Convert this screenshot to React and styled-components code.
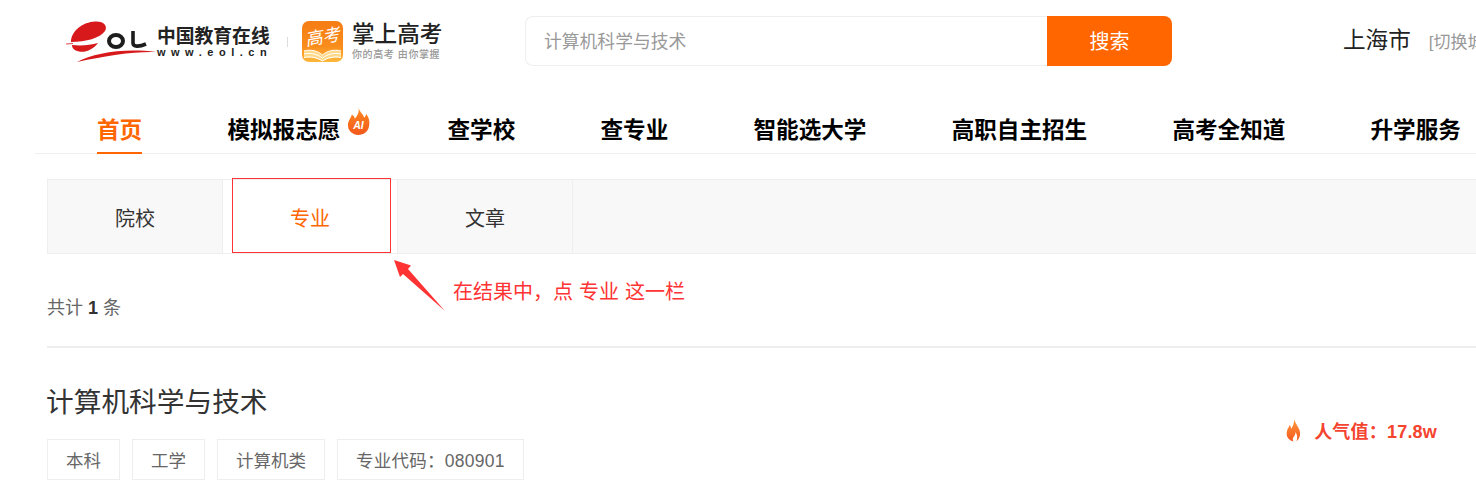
import React from 'react'
import styled, { createGlobalStyle } from 'styled-components'

const GlobalStyle = createGlobalStyle`
  html, body { margin: 0; padding: 0; background: #fff; }
  body { font-family: "Liberation Sans", "Noto Sans CJK SC", sans-serif; overflow: hidden; }
  * { box-sizing: border-box; }
`

const Page = styled.div`
  position: relative;
  width: 1476px;
  height: 497px;
  overflow: hidden;
`
const Header = styled.header`
  display: flex;
  align-items: flex-start;
  height: 97px;
  padding: 16px 0 0 70px;
  white-space: nowrap;
`
const Brand = styled.div`
  display: flex;
  flex: none;
  align-items: center;
  width: 455px;
  height: 50px;
`
const EolMark = styled.svg`
  flex: none;
  margin: 2px 0 0 -8px;
`
const EolText = styled.div`
  display: flex;
  flex: none;
  flex-direction: column;
  width: 113px;
  margin-top: 1px;
`
const EolName = styled.span`
  font-size: 18.8px;
  line-height: 21px;
  font-weight: 700;
  color: #222;
`
const EolUrl = styled.span`
  font-size: 11px;
  line-height: 11px;
  font-weight: 700;
  letter-spacing: 5.5px;
  color: #222;
`
const BrandDivider = styled.i`
  flex: none;
  width: 1px;
  height: 10px;
  margin: 2px 14px 0 17px;
  background: #ddd;
`
const AppIcon = styled.div`
  position: relative;
  flex: none;
  width: 41px;
  height: 41px;
  margin-right: 9px;
  border-radius: 7px;
  overflow: hidden;
  background: linear-gradient(180deg, #f67c14 0%, #f98d1c 62%, #fdb83c 100%);
`
const AppIconText = styled.span`
  position: absolute;
  top: 6px;
  left: 3px;
  font-family: "Liberation Serif", "Noto Sans CJK SC", serif;
  font-size: 17.5px;
  line-height: 20px;
  font-style: italic;
  color: #fff;
  transform: rotate(-10deg);
`
const AppBook = styled.svg`
  position: absolute;
  left: 0;
  bottom: 0;
`
const AppText = styled.div`
  display: flex;
  flex-direction: column;
  margin-top: 1px;
`
const AppName = styled.span`
  font-size: 22.6px;
  line-height: 26px;
  font-weight: 500;
  color: #222;
`
const AppSlogan = styled.span`
  font-size: 10px;
  line-height: 13px;
  font-weight: 500;
  letter-spacing: 0.6px;
  color: #999;
`
const Search = styled.div`
  display: flex;
  flex: none;
  width: 647px;
  height: 50px;
  border: 1px solid #eee;
  border-right: 0;
  border-radius: 8px;
`
const SearchInput = styled.div`
  flex: 1;
  padding-left: 18px;
  font-size: 17.8px;
  line-height: 50px;
  color: #999;
`
const SearchButton = styled.div`
  width: 125px;
  height: 50px;
  margin: -1px 0;
  border-radius: 0 8px 8px 0;
  background: #f60;
  color: #fff;
  font-size: 20px;
  line-height: 52px;
  text-align: center;
`
const City = styled.div`
  display: flex;
  flex: none;
  align-items: baseline;
  margin-left: 171px;
  line-height: 50px;
`
const CityName = styled.span`
  font-size: 22.6px;
  color: #222;
`
const CitySwitch = styled.span`
  margin-left: 18px;
  font-size: 17px;
  color: #999;
`
const Nav = styled.nav`
  display: flex;
  gap: 85.2px;
  height: 57px;
  margin-left: 35px;
  padding-left: 62px;
  border-bottom: 1px solid #eee;
  white-space: nowrap;
`
const NavItem = styled.a`
  position: relative;
  flex: none;
  height: 57px;
  margin-right: ${p => (p.$hot ? '22px' : '0')};
  border-bottom: ${p => (p.$active ? '2px solid #f60' : '0')};
  font-size: 22.6px;
  line-height: 68px;
  font-weight: 700;
  color: ${p => (p.$active ? '#f60' : '#000')};
`
const HotBadge = styled.svg`
  position: absolute;
  top: 10px;
  right: -30px;
`
const Main = styled.main`
  padding: 25px 0 0 47px;
`
const Tabs = styled.div`
  display: flex;
  width: 1500px;
  height: 75px;
  border: 1px solid #eee;
  border-right: 0;
  background: #f8f8f8;
`
const Tab = styled.div`
  width: 175px;
  border-right: 1px solid #eee;
  background: ${p => (p.$active ? '#fff' : 'transparent')};
  color: ${p => (p.$active ? '#f60' : '#333')};
  font-size: 20px;
  line-height: 78px;
  text-align: center;
`
const Count = styled.div`
  height: 94px;
  padding-top: 41px;
  border-bottom: 2px solid #eee;
  font-size: 18px;
  line-height: 26px;
  color: #666;
  b { color: #333; }
`
const Result = styled.div`
  display: flex;
  justify-content: space-between;
  padding: 35px 39px 0 0;
`
const Title = styled.h2`
  margin: 0 0 0 -1px;
  font-size: 27.7px;
  line-height: 40px;
  font-weight: 400;
  color: #333;
`
const TagRow = styled.div`
  display: flex;
  gap: 12px;
  margin-top: 16px;
`
const Tag = styled.span`
  height: 41px;
  padding: 0 18px;
  border: 1px solid #eee;
  font-size: 17.5px;
  line-height: 42px;
  letter-spacing: ${p => (p.$code ? '0.26px' : '0')};
  color: #666;
`
const Popularity = styled.div`
  display: flex;
  align-items: center;
  gap: 13px;
  height: 26px;
  margin-top: 34px;
  font-size: 18px;
  font-weight: 700;
  letter-spacing: 0.2px;
  color: #f4432f;
`
const HighlightBox = styled.div`
  position: absolute;
  left: 232px;
  top: 178px;
  width: 159px;
  height: 75px;
  border: 1px solid #f33;
`
const ArrowMark = styled.svg`
  position: absolute;
  left: 390px;
  top: 255px;
`
const Note = styled.div`
  position: absolute;
  left: 453px;
  top: 277px;
  font-size: 20px;
  line-height: 30px;
  word-spacing: 0.5px;
  color: #f33;
  white-space: pre;
`

const EolLogo = () => (
  <EolMark width="95" height="48" viewBox="0 0 95 48">
    <path d="M9 24 C9 13 21 4 33 3.5 C42 3 46 8 43 13 C38 20 24 24 9 24 Z" fill="#d7191c" />
    <path d="M10 27 C20 28 28 27 36 25 C32 31 23 35 17 33.5 C12 32.5 10 30 10 27 Z" fill="#d7191c" />
    <path d="M4 26 L11 25.5" stroke="#d7191c" strokeWidth="0.8" />
    <ellipse cx="54" cy="23" rx="7" ry="6" fill="none" stroke="#1d1d1d" strokeWidth="4" />
    <path d="M71 13 L71 25 C71 29 77 29 84 26" fill="none" stroke="#1d1d1d" strokeWidth="3.6" />
    <path d="M15 44 C32 35 62 30 94 34 C70 33.5 45 37.5 15 44 Z" fill="#d7191c" />
  </EolMark>
)

const AppLogo = () => (
  <AppIcon>
    <AppIconText>高考</AppIconText>
    <AppBook width="41" height="14" viewBox="0 0 41 14">
      <path d="M2 3 C9 1 16 3 20.5 7 C25 3 32 1 39 3 L39 10 C32 9 26 10 20.5 13 C15 10 9 9 2 10 Z" fill="#ffd98a" />
      <path d="M2 3 C9 1 16 3 20.5 7 M39 3 C32 1 25 3 20.5 7 M2 6 C9 4.5 15 6 20.5 10 M39 6 C32 4.5 26 6 20.5 10 M2 9.5 C9 8 15 9.5 20.5 13 M39 9.5 C32 8 26 9.5 20.5 13" stroke="#fff" strokeWidth="1" fill="none" />
    </AppBook>
  </AppIcon>
)

const navItems = ['查学校', '查专业', '智能选大学', '高职自主招生', '高考全知道', '升学服务']

const App = () => {
  return (
    <Page>
      <GlobalStyle />
      <Header>
        <Brand>
          <EolLogo />
          <EolText>
            <EolName>中国教育在线</EolName>
            <EolUrl>www.eol.cn</EolUrl>
          </EolText>
          <BrandDivider />
          <AppLogo />
          <AppText>
            <AppName>掌上高考</AppName>
            <AppSlogan>你的高考 由你掌握</AppSlogan>
          </AppText>
        </Brand>
        <Search>
          <SearchInput>计算机科学与技术</SearchInput>
          <SearchButton>搜索</SearchButton>
        </Search>
        <City>
          <CityName>上海市</CityName>
          <CitySwitch>[切换城市]</CitySwitch>
        </City>
      </Header>
      <Nav>
        <NavItem $active>首页</NavItem>
        <NavItem $hot>
          模拟报志愿
          <HotBadge width="23" height="29" viewBox="0 0 24 30">
            <defs>
              <linearGradient id="hot" x1="0" y1="0" x2="0" y2="1">
                <stop offset="0" stopColor="#ff8a1e" />
                <stop offset="1" stopColor="#f2581c" />
              </linearGradient>
            </defs>
            <path d="M12 0 C13 5 17 7 18 11 C19 10 20 9 20 7 C23 11 24 15 23 20 C22 26 17 29 12 29 C6 29 1 25 1 19 C1 14 4 12 5 8 C7 9 8 10 8 12 C11 9 13 5 12 0 Z" fill="url(#hot)" />
            <text x="12" y="23" fontSize="11" fontWeight="700" fontStyle="italic" fill="#fff" textAnchor="middle">AI</text>
          </HotBadge>
        </NavItem>
        {navItems.map(item => <NavItem key={item}>{item}</NavItem>)}
      </Nav>
      <Main>
        <Tabs>
          <Tab>院校</Tab>
          <Tab $active>专业</Tab>
          <Tab>文章</Tab>
        </Tabs>
        <Count>共计 <b>1</b> 条</Count>
        <Result>
          <div>
            <Title>计算机科学与技术</Title>
            <TagRow>
              <Tag>本科</Tag>
              <Tag>工学</Tag>
              <Tag>计算机类</Tag>
              <Tag $code>专业代码：080901</Tag>
            </TagRow>
          </div>
          <Popularity>
            <svg width="15" height="23" viewBox="0 0 15 23">
              <defs>
                <linearGradient id="fire" x1="0" y1="0" x2="0" y2="1">
                  <stop offset="0" stopColor="#ff9a3c" />
                  <stop offset="1" stopColor="#f4581f" />
                </linearGradient>
              </defs>
              <path d="M8 0 C9 4 12 7 13.5 11 C15 15 14 19 10.5 22.5 C11.5 19 11.5 16 9.5 13 C9.5 16 8 17 7 19 C6.5 20.5 7 21.5 7.5 22.5 C3 21.5 0 18 0.8 13 C1.2 10 2.6 9 3.6 6 C4.6 7 5 8 5 10 C7 7 8.5 4 8 0 Z" fill="url(#fire)" />
            </svg>
            <span>人气值：17.8w</span>
          </Popularity>
        </Result>
      </Main>
      <HighlightBox />
      <ArrowMark width="60" height="62" viewBox="0 0 60 62">
        <path d="M4 5 L21 10.5 L18 14 L55 56 L13 19 L10 22 Z" fill="#f33" />
      </ArrowMark>
      <Note>在结果中，点 专业 这一栏</Note>
    </Page>
  )
}

export default App
